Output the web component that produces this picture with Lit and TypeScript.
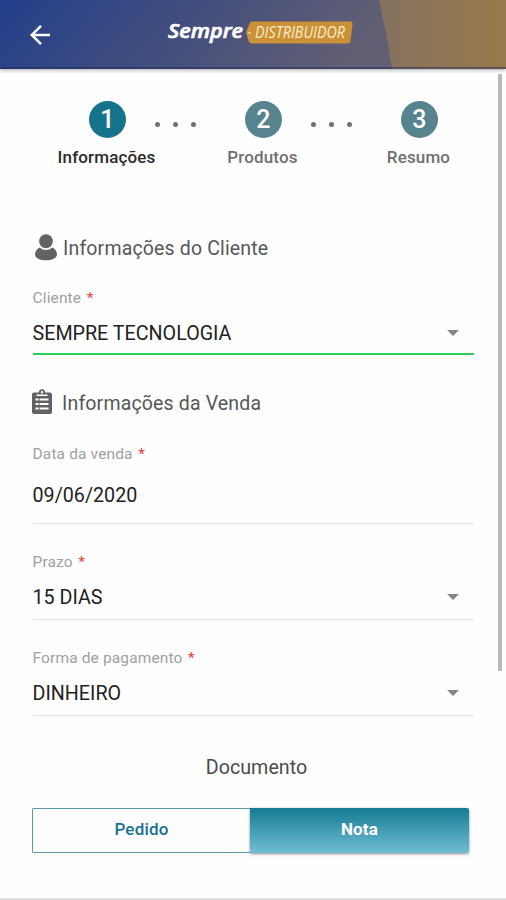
import { LitElement, html, css, nothing } from "lit";
import { customElement, property } from "lit/decorators.js";

@customElement("app-header")
class AppHeader extends LitElement {
  static styles = css`
    :host { display: block; height: 69px; flex: none; box-shadow: 0 1px 4px rgba(0, 0, 0, 0.35); z-index: 1; }
    svg { display: block; width: 100%; height: 69px; }
    .brand { font: italic 600 20.5px "Open Sans", sans-serif; fill: #fff; stroke: #fff; stroke-width: 0.7; }
    .tag { font: italic 400 15.5px "Open Sans", sans-serif; fill: #fbeccb; }
  `;
  render() {
    return html`<svg viewBox="0 0 506 69">
      <defs>
        <linearGradient id="bar" x1="0" y1="0" x2="1" y2="0.12">
          <stop offset="0" stop-color="#223f8b" />
          <stop offset="0.45" stop-color="#47507c" />
          <stop offset="0.78" stop-color="#625f74" />
        </linearGradient>
        <linearGradient id="gold" x1="0" x2="1">
          <stop offset="0" stop-color="#85715f" />
          <stop offset="1" stop-color="#98794b" />
        </linearGradient>
      </defs>
      <rect width="506" height="69" fill="url(#bar)" />
      <path d="M379 0H506V69H392Q387 34 379 0Z" fill="url(#gold)" />
      <rect y="67" width="506" height="2" fill="#17275f" opacity="0.45" />
      <path d="M50 35H32M41 25.8L31.8 35L41 44.2" fill="none" stroke="#fff" stroke-width="2.5" />
      <text class="brand" x="168" y="38" textLength="75" lengthAdjust="spacingAndGlyphs">Sempre</text>
      <path d="M252 21.5H350Q353 21.5 352.6 24L350.5 41Q350 43.5 347 43.5H252Q249.5 43.5 248.8 41.5L246 32.5L249.5 23.5Q250 21.5 252 21.5Z" fill="#cb9137" />
      <circle cx="249.5" cy="32.8" r="1" fill="#fbeccb" />
      <text class="tag" x="255" y="38.3" textLength="90" lengthAdjust="spacingAndGlyphs">DISTRIBUIDOR</text>
    </svg>`;
  }
}

@customElement("step-bar")
class StepBar extends LitElement {
  static styles = css`
    :host { display: flex; height: 66px; }
    .step { width: 116px; display: flex; flex-direction: column; align-items: center; }
    .num { width: 37px; height: 37px; margin-left: 1.5px; border-radius: 50%; background: #57838f; color: #fff; font-size: 25px; font-weight: 500; line-height: 38px; text-align: center; }
    .label { margin-top: 9px; font-size: 17px; line-height: 20px; font-weight: 500; color: #707070; letter-spacing: 0.14px; white-space: nowrap; }
    .on .num { background: #15738c; }
    .on .label { color: #2b2b2b; }
    .dots { width: 58px; margin: 0 0 0 -18px; display: flex; justify-content: center; gap: 13px; padding-top: 21px; }
    .dot { width: 5px; height: 5px; border-radius: 50%; background: #707070; flex: none; }
  `;
  render() {
    return ["Informações", "Produtos", "Resumo"].map(
      (label, i) => html`
        ${i ? html`<div class="dots"><i class="dot"></i><i class="dot"></i><i class="dot"></i></div>` : nothing}
        <div class="step ${i === 0 ? "on" : ""}">
          <div class="num">${i + 1}</div>
          <div class="label">${label}</div>
        </div>`
    );
  }
}

@customElement("form-field")
class FormField extends LitElement {
  @property() label = "";
  @property() value = "";
  @property({ type: Boolean }) select = false;
  static styles = css`
    :host { display: block; border-bottom: 1px solid #dfdfdf; }
    :host([active]) { border-bottom: 2px solid #25d056; }
    .label { font-size: 15.5px; line-height: 20px; color: #a0a0a0; letter-spacing: 0.14px; }
    .req { color: #f43b3b; margin-left: 1.5px; }
    .row { display: flex; align-items: center; justify-content: space-between; height: 24px; margin: 13px 15px 10px 0; }
    :host([tall]) .row { margin: 19px 15px 16px 0; }
    :host([active]) .row { margin: 13px 15px 8px 0; }
    .value { font-size: 19.7px; line-height: 24px; padding-top: 2px; color: #222; white-space: nowrap; }
    svg { width: 12px; height: 6px; display: block; }
  `;
  render() {
    return html`<div class="label">${this.label} <span class="req">*</span></div>
      <div class="row">
        <span class="value">${this.value}</span>
        ${this.select ? html`<svg viewBox="0 0 12 6"><path d="M0 0H12L6 6Z" fill="#858585" /></svg>` : nothing}
      </div>`;
  }
}

@customElement("app-root")
class AppRoot extends LitElement {
  static styles = css`
    :host { display: flex; flex-direction: column; position: relative; height: 900px; box-sizing: border-box; overflow: hidden; background: #fefefe; border-bottom: 2px solid #dedede; font-family: Roboto, sans-serif; }
    step-bar { margin: 32px 0 0 48.5px; }
    main { display: flex; flex-direction: column; padding: 0 32px 0 32.5px; }
    .heading { display: flex; align-items: center; height: 24px; font-size: 19.5px; line-height: 24px; color: #575757; letter-spacing: 0.16px; white-space: nowrap; }
    .heading svg { flex: none; fill: #626262; }
    .user { width: 24px; height: 28px; margin: -2px 5.5px 0 1px; }
    .clip { width: 20px; height: 26px; margin: -4px 10px 0 -0.5px; }
    .first { margin-top: 70px; }
    .second { margin-top: 37px; }
    .gap { margin-top: 27px; }
    .gap-wide { margin-top: 28px; }
    .doc { width: 448px; margin-top: 40px; text-align: center; font-size: 19.7px; line-height: 24px; color: #4c4c4c; }
    .seg { display: flex; width: 437px; height: 45px; margin: 28px 0 0 -0.5px; }
    .btn { width: 218px; box-sizing: border-box; border: 1px solid #5d98a8; border-right: 0; border-radius: 2px 0 0 2px; display: flex; align-items: center; justify-content: center; font-size: 17px; font-weight: 500; color: #17718d; letter-spacing: 0.2px; padding-bottom: 4px; }
    .active { width: 219px; border: 0; border-radius: 0 2px 2px 0; background: linear-gradient(#157b93, #70bed3); color: #fff; font-weight: 700; box-shadow: 0 1px 3px rgba(0, 0, 0, 0.45); }
    .thumb { position: absolute; left: 498px; top: 74px; width: 4px; height: 597px; background: #b9b9b9; }
  `;
  render() {
    return html`
      <app-header></app-header>
      <step-bar></step-bar>
      <main>
        <div class="heading first">
          <svg class="user" viewBox="0 0 24 28"><ellipse cx="12" cy="7.3" rx="6.8" ry="7" /><path d="M5.5 13.5Q12 18.5 18.5 13.5C21.5 15 23 18 23 20.5C23 28.2 1 28.2 1 20.5C1 18 2.5 15 5.5 13.5Z" /></svg>
          <span>Informações do Cliente</span>
        </div>
        <form-field class="gap" label="Cliente" value="SEMPRE TECNOLOGIA" select active></form-field>
        <div class="heading second">
          <svg class="clip" viewBox="0 0 20 26"><path fill-rule="evenodd" d="M2 3.5H6.8C7 1.5 8 0.3 10 0.3S13 1.5 13.2 3.5H18Q20 3.5 20 5.5V23Q20 25 18 25H2Q0 25 0 23V5.5Q0 3.5 2 3.5ZM10 2A1.2 1.2 0 1 0 10 4.4A1.2 1.2 0 1 0 10 2ZM3.5 9.5V11.5H6.5V9.5ZM7.5 9.5V11.5H16.5V9.5ZM3.5 14V16H6.5V14ZM7.5 14V16H16.5V14ZM3.5 18.5V20.5H6.5V18.5ZM7.5 18.5V20.5H16.5V18.5ZM4.500 5.500V7H15.500V5.500Z" /></svg>
          <span>Informações da Venda</span>
        </div>
        <form-field class="gap-wide" label="Data da venda" value="09/06/2020" tall></form-field>
        <form-field class="gap-wide" label="Prazo" value="15 DIAS" select></form-field>
        <form-field class="gap-wide" label="Forma de pagamento" value="DINHEIRO" select></form-field>
        <div class="doc">Documento</div>
        <div class="seg"><div class="btn">Pedido</div><div class="btn active">Nota</div></div>
      </main>
      <div class="thumb"></div>
    `;
  }
}
